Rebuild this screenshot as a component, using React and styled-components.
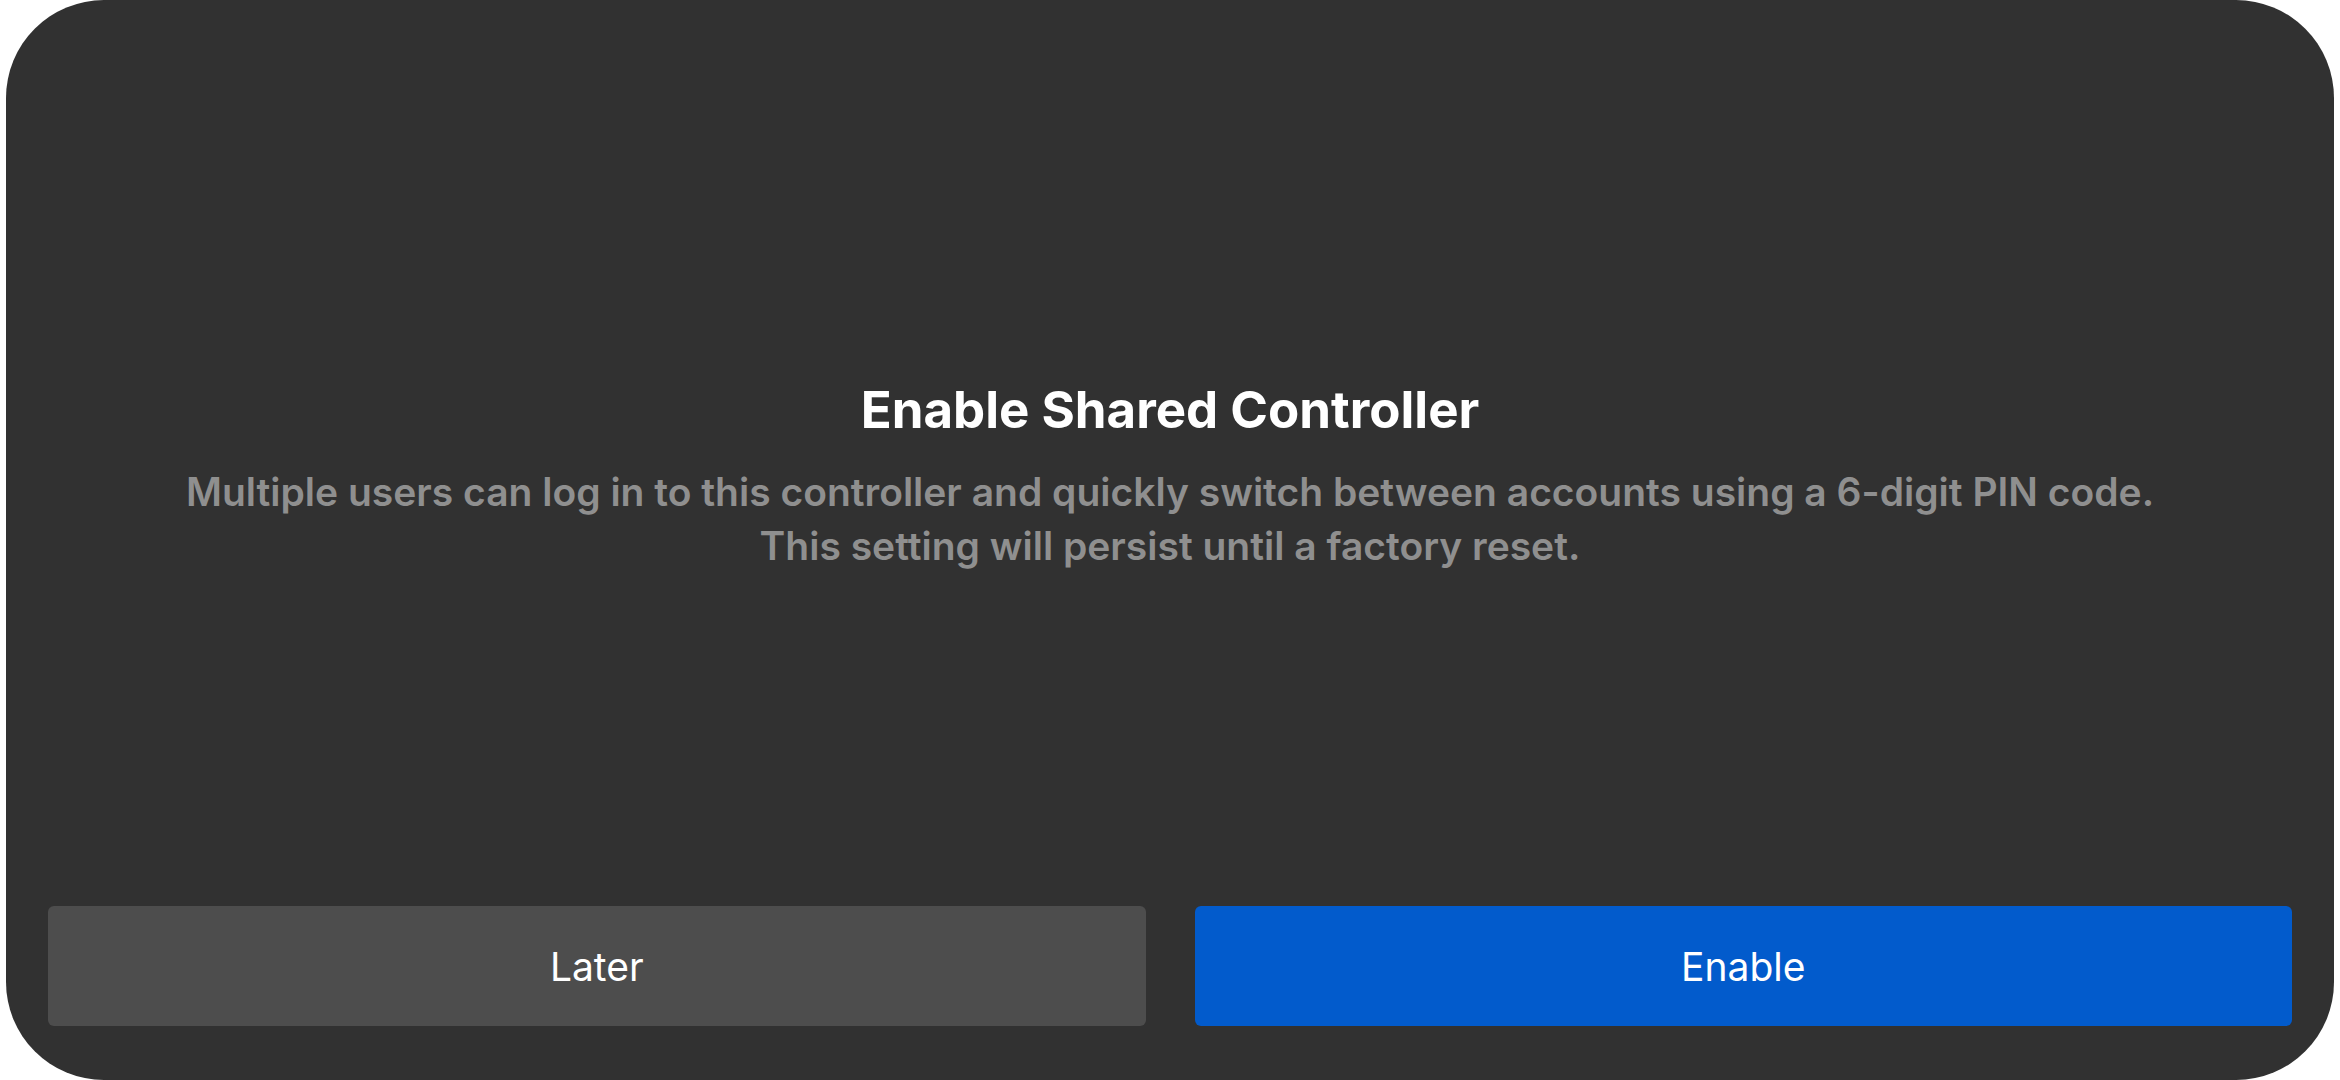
import React from 'react';
import styled, { createGlobalStyle } from 'styled-components';

const GlobalStyle = createGlobalStyle`
  html, body {
    margin: 0;
    padding: 0;
    background: #ffffff;
  }
  body {
    font-family: Inter, Roboto, "Liberation Sans", sans-serif;
  }
`;

const Screen = styled.div`
  box-sizing: border-box;
  width: 2340px;
  height: 1080px;
  padding: 0 6px;
`;

const Panel = styled.div`
  box-sizing: border-box;
  height: 100%;
  background: #313131;
  border-radius: 98px;
  display: flex;
  flex-direction: column;
  padding: 0 42px 54px 42px;
`;

const Body = styled.div`
  flex: 1;
  display: flex;
  flex-direction: column;
  align-items: center;
  padding-top: 380px;
`;

const Title = styled.h1`
  margin: 0;
  color: #ffffff;
  font-size: 51px;
  font-weight: 700;
  line-height: 60px;
`;

const Message = styled.p`
  margin: 25px 0 0 0;
  color: #8f8f8f;
  font-size: 39px;
  font-weight: 600;
  line-height: 54px;
  text-align: center;
`;

const Actions = styled.div`
  display: grid;
  grid-template-columns: 1fr 1fr;
  gap: 49px;
`;

const Button = styled.button`
  height: 120px;
  border: none;
  border-radius: 6px;
  background: ${p => (p.$primary ? '#025bcc' : '#4d4d4d')};
  color: #ffffff;
  font-family: Inter, Roboto, "Liberation Sans", sans-serif;
  font-size: 39px;
  font-weight: 400;
  cursor: pointer;
`;

const App = () => (
  <Screen>
    <GlobalStyle />
    <Panel>
      <Body>
        <Title>Enable Shared Controller</Title>
        <Message>
          Multiple users can log in to this controller and quickly switch between accounts using a 6-digit PIN code.
          <br />
          This setting will persist until a factory reset.
        </Message>
      </Body>
      <Actions>
        <Button>Later</Button>
        <Button $primary>Enable</Button>
      </Actions>
    </Panel>
  </Screen>
);

export default App;
